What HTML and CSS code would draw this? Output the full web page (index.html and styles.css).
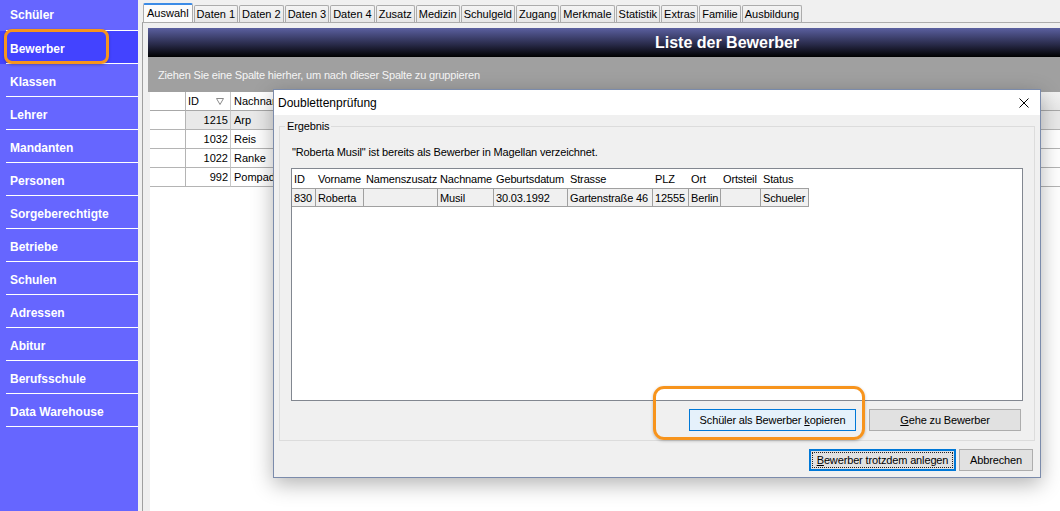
FILE: index.html
```html
<!DOCTYPE html>
<html lang="de">
<head>
<meta charset="utf-8">
<title>Bewerber</title>
<link rel="stylesheet" href="styles.css">
</head>
<body>
<div class="app">
  <nav class="sidebar">
    <div class="nav-item">Schüler</div>
    <div class="nav-item active">Bewerber<span class="mark mark-nav"></span></div>
    <div class="nav-item">Klassen</div>
    <div class="nav-item">Lehrer</div>
    <div class="nav-item">Mandanten</div>
    <div class="nav-item">Personen</div>
    <div class="nav-item">Sorgeberechtigte</div>
    <div class="nav-item">Betriebe</div>
    <div class="nav-item">Schulen</div>
    <div class="nav-item">Adressen</div>
    <div class="nav-item">Abitur</div>
    <div class="nav-item">Berufsschule</div>
    <div class="nav-item">Data Warehouse</div>
  </nav>
  <main class="main">
    <div class="tabs">
      <div class="tab active">Auswahl</div>
      <div class="tab">Daten 1</div>
      <div class="tab">Daten 2</div>
      <div class="tab">Daten 3</div>
      <div class="tab">Daten 4</div>
      <div class="tab">Zusatz</div>
      <div class="tab">Medizin</div>
      <div class="tab">Schulgeld</div>
      <div class="tab">Zugang</div>
      <div class="tab">Merkmale</div>
      <div class="tab">Statistik</div>
      <div class="tab">Extras</div>
      <div class="tab">Familie</div>
      <div class="tab">Ausbildung</div>
    </div>
    <div class="panel">
      <div class="content">
        <div class="list-title">Liste der Bewerber</div>
        <div class="group-bar">Ziehen Sie eine Spalte hierher, um nach dieser Spalte zu gruppieren</div>
        <div class="grid">
          <table class="grid-table">
            <colgroup>
              <col class="c-ind"><col class="c-id"><col class="c-name"><col>
            </colgroup>
            <thead>
              <tr>
                <th class="ind"></th>
                <th class="id-head">ID<svg class="sort" width="8" height="7" viewBox="0 0 8 7"><polygon points="0.5,0.5 7.5,0.5 4,6.5" fill="none" stroke="#8a8a8a" stroke-width="1"/></svg></th>
                <th>Nachname</th>
                <th class="fill"></th>
              </tr>
            </thead>
            <tbody>
              <tr class="sel"><td class="ind"></td><td class="num">1215</td><td>Arp</td><td></td></tr>
              <tr><td class="ind"></td><td class="num">1032</td><td>Reis</td><td></td></tr>
              <tr><td class="ind"></td><td class="num">1022</td><td>Ranke</td><td></td></tr>
              <tr><td class="ind"></td><td class="num">992</td><td>Pompadour</td><td></td></tr>
            </tbody>
          </table>
        </div>
      </div>
    </div>
  </main>
</div>

<div class="dialog">
  <div class="dlg-title">
    <span class="dlg-caption">Doublettenprüfung</span>
    <svg class="close" width="10" height="10" viewBox="0 0 10 10"><path d="M0.5 0.5 L9.5 9.5 M9.5 0.5 L0.5 9.5" stroke="#000" stroke-width="1"/></svg>
  </div>
  <div class="dlg-body">
    <div class="group">
      <div class="group-title">Ergebnis</div>
      <div class="message">"Roberta Musil" ist bereits als Bewerber in Magellan verzeichnet.</div>
      <div class="listbox">
        <table class="dup">
          <colgroup>
            <col style="width:24px"><col style="width:48px"><col style="width:74px"><col style="width:56px"><col style="width:74px"><col style="width:85px"><col style="width:36px"><col style="width:32px"><col style="width:40px"><col style="width:48px">
          </colgroup>
          <thead>
            <tr><th>ID</th><th>Vorname</th><th>Namenszusatz</th><th>Nachname</th><th>Geburtsdatum</th><th>Strasse</th><th>PLZ</th><th>Ort</th><th>Ortsteil</th><th>Status</th></tr>
          </thead>
          <tbody>
            <tr><td>830</td><td>Roberta</td><td></td><td>Musil</td><td>30.03.1992</td><td>Gartenstraße 46</td><td>12555</td><td>Berlin</td><td></td><td>Schueler</td></tr>
          </tbody>
        </table>
      </div>
      <div class="group-buttons">
        <div class="btn btn-copy"><span>Schüler als Bewerber <u>k</u>opieren</span></div>
        <div class="btn btn-goto"><span><u>G</u>ehe zu Bewerber</span></div>
      </div>
    </div>
    <div class="dlg-buttons">
      <div class="btn btn-default"><span><u>B</u>ewerber trotzdem anlegen</span></div>
      <div class="btn btn-cancel"><span>Abbrechen</span></div>
    </div>
  </div>
  <span class="mark mark-dialog"></span>
</div>
</body>
</html>
```
FILE: styles.css
```css
* { box-sizing: border-box; }

html, body {
  margin: 0;
  width: 1060px;
  height: 511px;
  overflow: hidden;
}

body {
  position: relative;
  font-family: "Liberation Sans", Arial, sans-serif;
  font-size: 11px;
  color: #000;
  background: #f0f0f0;
}

.app {
  display: flex;
  height: 511px;
}

/* ---------- sidebar ---------- */
.sidebar {
  width: 138px;
  flex: none;
  background: #6666ff;
  display: flex;
  flex-direction: column;
}

.nav-item {
  position: relative;
  height: 33px;
  padding: 3px 0 1px 10px;
  display: flex;
  align-items: center;
  color: #fff;
  font-weight: bold;
  font-size: 12px;
  background: linear-gradient(#fff, #fff) 6px 100% / calc(100% - 6px) 1px no-repeat;
}

.nav-item:first-child {
  height: 31px;
  padding-top: 0;
}

.nav-item.active { background-color: #4343ff; }

.mark {
  position: absolute;
  border: 3px solid #f7941d;
  border-radius: 8px;
  box-shadow: 0 1px 3px rgba(0, 0, 0, 0.25);
  pointer-events: none;
}

.mark-nav {
  left: 4px;
  top: -2px;
  width: 105px;
  height: 35px;
}

/* ---------- main ---------- */
.main {
  flex: 1;
  min-width: 0;
  display: flex;
  flex-direction: column;
  padding-left: 4px;
  overflow: hidden;
}

.tabs {
  display: flex;
  align-items: flex-end;
  gap: 1px;
  height: 22px;
  padding-left: 1px;
}

.tab {
  height: 17px;
  padding: 0 2px;
  border: 1px solid #acacac;
  border-bottom: none;
  border-radius: 2px 2px 0 0;
  background: linear-gradient(#f4f4f4, #e6e6e6);
  line-height: 16px;
  white-space: nowrap;
}

.tab.active {
  height: 19px;
  padding: 0 3px;
  background: #fbfbfb;
  border-top: 2px solid #3b8be6;
  line-height: 17px;
}

.panel {
  flex: 1;
  display: flex;
  border-left: 1px solid #a0a0a0;
  border-top: 1px solid #acacac;
  padding: 5px 0 0 5px;
  min-height: 0;
}

.content {
  width: 1158px;
  flex: none;
  display: flex;
  flex-direction: column;
}

.list-title {
  height: 29px;
  line-height: 29px;
  text-align: center;
  color: #fff;
  font-weight: bold;
  font-size: 16px;
  background: linear-gradient(#5b60a0, #2a2c4c 55%, #000);
}

.group-bar {
  height: 35px;
  line-height: 36px;
  padding-left: 10px;
  background: #a0a0a0;
  color: #f6f6f6;
  letter-spacing: -0.17px;
}

.grid {
  flex: 1;
  margin-left: 2px;
  background: #fff;
}

.grid-table {
  width: 100%;
  table-layout: fixed;
  border-collapse: separate;
  border-spacing: 0;
}

.c-ind { width: 36px; }
.c-id { width: 45px; }
.c-name { width: 43px; }

.grid-table th,
.grid-table td {
  padding: 1px 0 0 3px;
  line-height: 17px;
  border-bottom: 1px solid #b4b4b4;
  border-right: 1px solid #c8c8c8;
  font-weight: normal;
  text-align: left;
  white-space: nowrap;
  overflow: hidden;
  text-overflow: clip;
}

.grid-table th { border-bottom-color: #a8a8a8; }
.grid-table th.fill { background: linear-gradient(#f2f2f2, #e8e8e8); }
.grid-table .ind { border-right-color: #b4b4b4; }
.grid-table .id-head { padding-left: 2px; }

.sort {
  margin-left: 17px;
  vertical-align: 0;
}

.grid-table td.num {
  text-align: right;
  padding-right: 2px;
  padding-left: 0;
}

.grid-table tr.sel td:not(.ind) { background: #e9e9e9; }

/* ---------- dialog ---------- */
.dialog {
  position: absolute;
  left: 273px;
  top: 89px;
  width: 768px;
  height: 389px;
  border: 1px solid #7b8bab;
  background: #f0f0f0;
  box-shadow: 0 6px 20px rgba(0, 0, 0, 0.3);
  display: flex;
  flex-direction: column;
  letter-spacing: -0.14px;
}

.dlg-title {
  height: 25px;
  flex: none;
  background: #fff;
  display: flex;
  align-items: center;
  padding: 0 11px 0 4px;
  font-size: 12px;
  letter-spacing: 0;
}

.dlg-caption { flex: 1; }

.dlg-body {
  flex: 1;
  display: flex;
  flex-direction: column;
  padding: 11px 5px 6px;
}

.group {
  border: 1px solid #dcdcdc;
  padding: 0 11px 9px;
}

.group-title {
  width: fit-content;
  margin: -7px 0 0 -6px;
  padding: 0 2px;
  background: #f0f0f0;
  line-height: 13px;
}

.message {
  margin: 12px 0 0 1px;
  padding-top: 1px;
  line-height: 13px;
}

.listbox {
  margin-top: 9px;
  height: 233px;
  border: 1px solid #828790;
  background: #fff;
}

.dup {
  table-layout: fixed;
  width: 517px;
  border-collapse: separate;
  border-spacing: 0;
}

.dup th {
  font-weight: normal;
  text-align: left;
  padding: 1px 0 0 2px;
  line-height: 18px;
  white-space: nowrap;
  overflow: hidden;
}

.dup td {
  background: #f0f0f0;
  border-top: 1px solid #a0a0a0;
  border-bottom: 1px solid #a0a0a0;
  border-right: 1px solid #a0a0a0;
  padding: 1px 0 0 2px;
  line-height: 16px;
  white-space: nowrap;
  overflow: hidden;
}

.group-buttons {
  display: flex;
  justify-content: flex-end;
  gap: 13px;
  margin-top: 8px;
  padding-right: 2px;
}

.btn {
  height: 22px;
  border: 1px solid #adadad;
  background: #e1e1e1;
  display: flex;
  align-items: center;
  justify-content: center;
  white-space: nowrap;
}

.btn-copy {
  width: 167px;
  background: #e5f1fb;
  border-color: #0078d7;
}

.btn-goto { width: 152px; }

.dlg-buttons {
  display: flex;
  justify-content: flex-end;
  gap: 3px;
  margin-top: 8px;
  padding-right: 2px;
}

.btn-default {
  width: 147px;
  border: 2px solid #0078d7;
  outline: 1px dotted #222;
  outline-offset: -4px;
}

.btn-cancel { width: 74px; }

.mark-dialog {
  left: 379px;
  top: 296px;
  width: 212px;
  height: 54px;
  border-radius: 11px;
}
```
